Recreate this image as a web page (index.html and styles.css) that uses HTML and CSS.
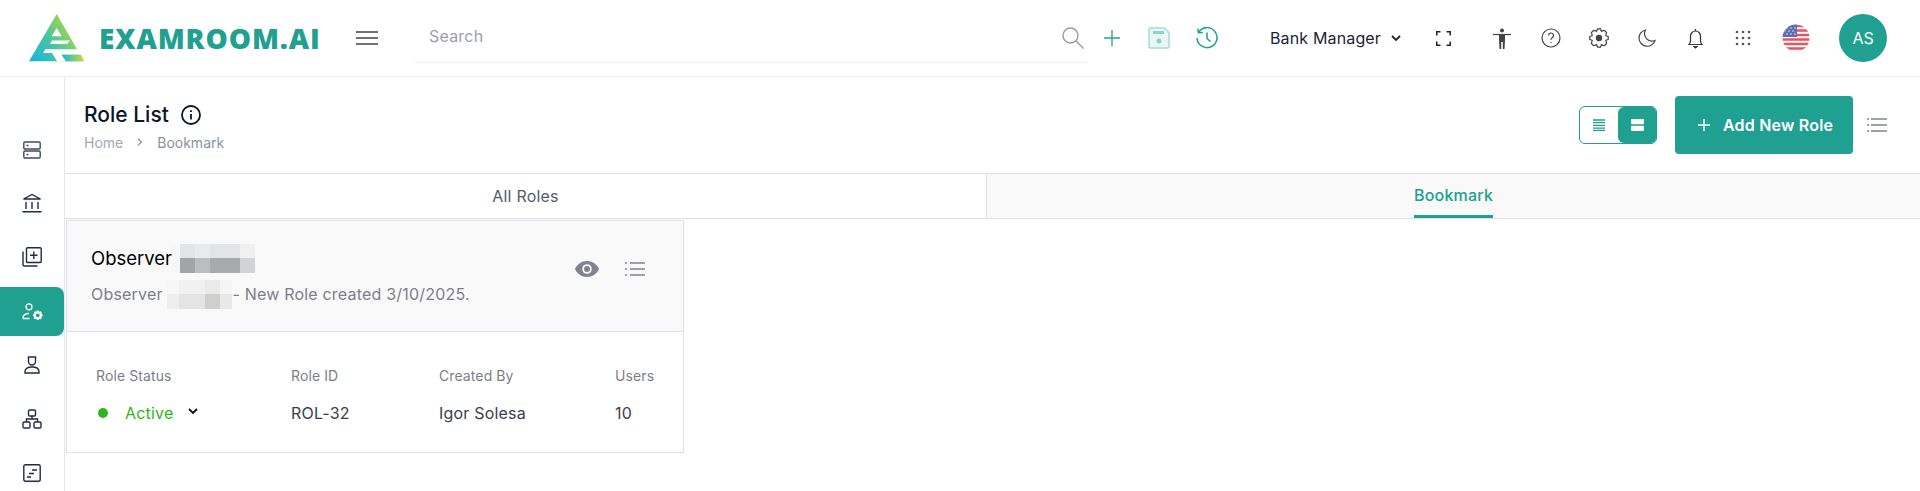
FILE: index.html
```html
<!DOCTYPE html>
<html lang="en">
<head>
    <meta charset="UTF-8">
    <meta name="viewport" content="width=device-width, initial-scale=1.0">
    <title>Role List</title>
    <link rel="stylesheet" href="styles.css">
</head>
<body>
    <header class="topbar">
        <div class="logo">
            <svg class="logo-mark" width="58" height="50" viewBox="0 0 58 50">
                <defs>
                    <linearGradient id="logo-a" x1="0" y1="1" x2="1" y2="0.4">
                        <stop offset="0" stop-color="#12b5e2"/>
                        <stop offset="0.5" stop-color="#4cc5a0"/>
                        <stop offset="1" stop-color="#c3dc2e"/>
                    </linearGradient>
                    <linearGradient id="logo-c" x1="0" y1="0" x2="1" y2="0">
                        <stop offset="0" stop-color="#14b6de"/>
                        <stop offset="1" stop-color="#c5dc35"/>
                    </linearGradient>
                </defs>
                <path d="M28.700 1L1 48.300H56z" fill="url(#logo-a)"/>
                <path d="M28.700 15L23.700 23.300H33.700zM24 27.600H42L39 31H22zM17.500 36.300H58V41.700H33.700L38 48.300H29L24 40H15z" fill="#fff"/>
                <path d="M33.700 41.700H53L56 48.300H38z" fill="url(#logo-c)"/>
            </svg>
            <span class="logo-text">EXAMROOM.AI</span>
        </div>
        <svg class="menu-icon" width="22" height="14" viewBox="0 0 22 14"><path d="M0 1h22M0 7h22M0 13h22" stroke="#444" stroke-width="1.5"/></svg>
        <div class="search">
            <span class="search-text">Search</span>
        </div>
        <svg class="search-icon" width="22" height="22" viewBox="0 0 22 22" fill="none" stroke="#9a9a9a" stroke-width="1.4"><circle cx="8.500" cy="8.500" r="7.500"/><path d="M14 14l7.500 7.500"/></svg>
        <svg class="plus-icon" width="16" height="16" viewBox="0 0 16 16"><path d="M8 0v16M0 8h16" stroke="#2aa596" stroke-width="1.4"/></svg>
        <svg class="save-icon" width="22" height="22" viewBox="0 0 22 22"><path d="M2.500 1h14L21 5.500V19.500a1.500 1.500 0 0 1-1.500 1.500h-17A1.500 1.500 0 0 1 1 19.500V2.500A1.500 1.500 0 0 1 2.500 1z" fill="#e9f6f4" stroke="#a5dcd4" stroke-width="1.500"/><path d="M5 4h11v3H5z" fill="#8fd2c9"/><circle cx="11" cy="14" r="2.500" fill="#8fd2c9"/></svg>
        <svg class="history-icon" width="22" height="22" viewBox="0 0 22 22" fill="none" stroke="#1f9f91" stroke-width="1.500"><path d="M2.400 5.500A10 10 0 1 1 1 11"/><path d="M1.800 1.500l.6 4.300 4.300-.3M11 5.500v6l3.500 3"/></svg>
        <div class="role-select">
            <span>Bank Manager</span>
            <svg width="10" height="7" viewBox="0 0 10 7" fill="none" stroke="#1c2433" stroke-width="1.800"><path d="M1 1l4 4 4-4"/></svg>
        </div>
        <svg class="full-icon" width="15" height="15" viewBox="0 0 15 15" fill="none" stroke="#222" stroke-width="1.500"><path d="M.8 4.500V.8h3.700M10.500.8h3.700v3.700M14.200 10.500v3.700h-3.700M4.500 14.200H.8v-3.700"/></svg>
        <div class="tools">
            <svg width="18" height="21" viewBox="0 0 18 21"><circle cx="9" cy="2.500" r="2" fill="#444"/><path d="M0 6.500h18" stroke="#444" stroke-width="1.200"/><path d="M6 6.500h6V12l-.5 9h-1.700V14H8.200v7H6.500L6 12z" fill="#444"/></svg>
            <svg width="20" height="20" viewBox="0 0 20 20" fill="none" stroke="#444" stroke-width="1.200"><circle cx="10" cy="10" r="9"/><path d="M7.500 7.500a2.500 2.500 0 1 1 3.700 2.200c-.8.500-1.200 1-1.200 2"/><path d="M10 14v1"/></svg>
            <svg class="gear-icon" width="20" height="20" viewBox="0 0 20 20" fill="none" stroke="#444" stroke-width="1.200"><path d="M8.500 .8h3l.8 2.400 3.140-.76 2.120 2.120-.76 3.140 2.400.8v3l-2.400.8.76 3.140-2.120 2.120-3.140-.76-.8 2.400h-3l-.8-2.400-3.140.76-2.120-2.120.76-3.140-2.400-.8v-3l2.400-.8-.76-3.140 2.120-2.120 3.140.76z"/><circle cx="10" cy="10" r="2.600" fill="#444"/></svg>
            <svg class="moon-icon" width="18" height="18" viewBox="0 0 18 18" fill="none" stroke="#444" stroke-width="1.200"><path d="M7.500 1a8.200 8.200 0 1 0 9.500 10.500A7.500 7.500 0 0 1 7.500 1z"/></svg>
            <svg width="15" height="21" viewBox="0 0 15 21" fill="none" stroke="#333" stroke-width="1.200"><path d="M1 16.500h13c-1.200-1-1.500-2-1.500-4V8a5 5 0 0 0-10 0v4.500c0 2-.3 3-1.500 4z"/><path d="M7.500 1v2"/><path d="M6 18.500h3l-1.500 1.500z" fill="#333"/></svg>
            <svg class="apps-icon" width="16" height="16" viewBox="0 0 16 16" fill="#555"><circle cx="2" cy="2" r="1.300"/><circle cx="8" cy="2" r="1.300"/><circle cx="14" cy="2" r="1.300"/><circle cx="2" cy="8" r="1.300"/><circle cx="8" cy="8" r="1.300"/><circle cx="14" cy="8" r="1.300"/><circle cx="2" cy="14" r="1.300"/><circle cx="8" cy="14" r="1.300"/><circle cx="14" cy="14" r="1.300"/></svg>
        </div>
        <svg class="flag" width="28" height="28" viewBox="0 0 28 28">
            <defs><clipPath id="flag-clip"><circle cx="14" cy="14" r="13.500"/></clipPath></defs>
            <g clip-path="url(#flag-clip)">
                <rect width="28" height="28" fill="#fff"/>
                <path d="M0 2h28M0 6.500h28M0 11h28M0 15.500h28M0 20h28M0 24.500h28" stroke="#e9525f" stroke-width="2.300"/>
                <rect width="15" height="13" fill="#5c6fb0"/>
                <g fill="#dfe4f5"><circle cx="5" cy="4" r=".8"/><circle cx="9" cy="4" r=".8"/><circle cx="13" cy="4" r=".8"/><circle cx="3" cy="7" r=".8"/><circle cx="7" cy="7" r=".8"/><circle cx="11" cy="7" r=".8"/><circle cx="5" cy="10" r=".8"/><circle cx="9" cy="10" r=".8"/><circle cx="13" cy="10" r=".8"/></g>
            </g>
        </svg>
        <div class="avatar">AS</div>
    </header>

    <div class="layout">
        <nav class="sidebar">
            <a class="side-item"><svg width="18" height="18" viewBox="0 0 18 18" fill="none" stroke="#3e4c5e" stroke-width="1.400"><rect x=".8" y="1" width="16.400" height="7" rx="1.200"/><rect x=".8" y="10" width="16.400" height="7" rx="1.200"/><path d="M3.500 4.500h2M3.500 13.500h2"/></svg></a>
            <a class="side-item"><svg width="20" height="20" viewBox="0 0 20 20" fill="none" stroke="#1f2d3f" stroke-width="1.400"><path d="M1.500 6L10 1.500 18.500 6z"/><path d="M4 9v7M10 9v7M16 9v7M.5 18.800h19"/></svg></a>
            <a class="side-item"><svg width="20" height="20" viewBox="0 0 20 20" fill="none" stroke="#1f2d3f" stroke-width="1.400"><rect x="4.500" y=".8" width="14.700" height="14.700" rx="1"/><path d="M11.800 4.500v7.400M8.100 8.200h7.400M1 4.500v13a1.500 1.500 0 0 0 1.500 1.500h13"/></svg></a>
            <a class="side-item active"><svg width="21" height="18" viewBox="0 0 21 18"><g fill="none" stroke="#fff" stroke-width="1.300"><circle cx="7" cy="3.800" r="3"/><path d="M1 15.500v-1.200c0-2 2.500-3.800 6-3.800M1 15.500h6.500"/></g><path transform="translate(11 7.500) scale(.48)" fill="#fff" fill-rule="evenodd" d="M8 0h4l.8 2.600 3.100-.9 2.400 2.400-.9 3.100L20 8v4l-2.600.8.900 3.100-2.400 2.400-3.100-.9L12 20H8l-.8-2.600-3.100.9-2.400-2.400.9-3.100L0 12V8l2.600-.8-.9-3.100 2.400-2.400 3.100.9zM10 6a4 4 0 1 0 0 8 4 4 0 0 0 0-8z"/></svg></a>
            <a class="side-item"><svg width="16" height="18" viewBox="0 0 16 18" fill="none" stroke="#1f2d3f" stroke-width="1.400"><path d="M4.500 1h7v4.500a3.500 3.500 0 0 1-7 0z"/><path d="M1 17v-1.500C1 12.500 4 11 8 11s7 1.500 7 4.500V17z"/></svg></a>
            <a class="side-item"><svg width="20" height="20" viewBox="0 0 20 20" fill="none" stroke="#1f2d3f" stroke-width="1.400"><rect x="6.500" y="1" width="7" height="6" rx="1.200"/><rect x="1" y="13" width="7" height="6" rx="1.200"/><rect x="12" y="13" width="7" height="6" rx="1.200"/><path d="M10 7v3M4.500 13v-3h11v3"/></svg></a>
            <a class="side-item"><svg width="18" height="18" viewBox="0 0 18 18" fill="none" stroke="#1f2d3f" stroke-width="1.400"><rect x=".8" y=".8" width="16.400" height="16.400" rx="1.500"/><path d="M9 6h5M6 9.500h5M4 13h4"/></svg></a>
        </nav>

        <main class="content">
            <div class="page-head">
                <div>
                    <h1 class="page-title">Role List
                        <svg width="20" height="20" viewBox="0 0 20 20" fill="none" stroke="#0c1526" stroke-width="1.800"><circle cx="10" cy="10" r="9"/><path d="M10 9v5.500M10 5.200v1.800"/></svg>
                    </h1>
                    <div class="crumbs">
                        <span>Home</span>
                        <svg width="6" height="8" viewBox="0 0 6 8" fill="none" stroke="#8b92a0" stroke-width="1.200"><path d="M1 .8L4.500 4 1 7.200"/></svg>
                        <span class="crumb-current">Bookmark</span>
                    </div>
                </div>
                <div class="page-actions">
                    <div class="view-toggle">
                        <span class="toggle-btn"><svg width="12" height="12" viewBox="0 0 12 12"><path d="M0 1h12M0 3.700h12M0 6.400h12M0 9.100h12M0 11.500h12" stroke="#1f9f91" stroke-width="1.300"/></svg></span>
                        <span class="toggle-btn on"><svg width="13" height="12" viewBox="0 0 13 12" fill="#fff"><rect width="13" height="5.300" rx="1"/><rect y="6.700" width="13" height="5.300" rx="1"/></svg></span>
                    </div>
                    <button class="add-btn">
                        <svg width="12" height="12" viewBox="0 0 12 12"><path d="M6 0v12M0 6h12" stroke="#fff" stroke-width="1.400"/></svg>
                        Add New Role
                    </button>
                    <svg width="20" height="16" viewBox="0 0 20 16"><path d="M4 2h16M4 8h16M4 14h16M0 2h2M0 8h2M0 14h2" stroke="#80848f" stroke-width="1.500"/></svg>
                </div>
            </div>

            <div class="tabs">
                <div class="tab current">All Roles</div>
                <div class="tab selected"><span class="tab-label">Bookmark</span></div>
            </div>

            <section class="card">
                <div class="card-head">
                    <div>
                        <div class="card-title">Observer<span class="mosaic mosaic-title"></span></div>
                        <div class="card-desc">Observer <span class="mosaic mosaic-desc"></span>- New Role created 3/10/2025.</div>
                    </div>
                    <div class="card-icons">
                        <svg width="24" height="16" viewBox="0 0 24 16"><path d="M12 0C6.500 0 2 3.300 0 8c2 4.700 6.500 8 12 8s10-3.300 12-8c-2-4.700-6.500-8-12-8z" fill="#80848f"/><circle cx="12" cy="8" r="4.800" fill="#f9f9fa"/><circle cx="12" cy="8" r="3" fill="#80848f"/></svg>
                        <svg width="20" height="16" viewBox="0 0 20 16"><path d="M5 2h15M5 8h15M5 14h15M0 2h2M0 8h2M0 14h2" stroke="#80848f" stroke-width="1.500"/></svg>
                    </div>
                </div>
                <div class="card-body">
                    <div class="field">
                        <span class="field-label">Role Status</span>
                        <span class="status"><i class="status-dot"></i>Active
                            <svg width="10" height="7" viewBox="0 0 10 7" fill="none" stroke="#111" stroke-width="1.800"><path d="M1 1l4 4 4-4"/></svg>
                        </span>
                    </div>
                    <div class="field">
                        <span class="field-label">Role ID</span>
                        <span class="field-value">ROL-32</span>
                    </div>
                    <div class="field">
                        <span class="field-label">Created By</span>
                        <span class="field-value">Igor Solesa</span>
                    </div>
                    <div class="field">
                        <span class="field-label">Users</span>
                        <span class="field-value">10</span>
                    </div>
                </div>
            </section>
        </main>
    </div>
</body>
</html>
```
FILE: styles.css
```css
* {
    box-sizing: border-box;
}
body {
    margin: 0;
    height: 491px;
    overflow: hidden;
    font-family: Inter, "Liberation Sans", sans-serif;
    background-color: #fff;
    color: #1c2433;
}
svg {
    display: block;
    flex: none;
}

/* top bar */
.topbar {
    display: flex;
    align-items: center;
    height: 77px;
    padding-left: 28px;
    border-bottom: 1px solid #eceef2;
}
.logo {
    display: flex;
    align-items: center;
    gap: 13px;
    width: 328px;
}
.logo-text {
    font-family: "Open Sans", sans-serif;
    font-size: 28px;
    font-weight: 800;
    letter-spacing: 0.9px;
    color: #20a090;
}
.menu-icon {
    margin-right: 37px;
}
.search {
    width: 672px;
    height: 48px;
    margin-top: 2px;
    padding: 11px 14px;
    border-bottom: 1px solid #eceef2;
}
.search-text {
    font-size: 16px;
    letter-spacing: 0.2px;
    color: #9aa1ad;
}
.search-icon {
    margin-left: -25px;
    margin-right: 20px;
}
.plus-icon {
    margin-right: 28px;
}
.save-icon {
    margin-right: 26px;
}
.role-select {
    display: flex;
    align-items: center;
    gap: 10px;
    margin-left: 52px;
    font-size: 16px;
    letter-spacing: 0.15px;
}
.full-icon {
    margin-left: 35px;
}
.tools {
    display: flex;
    align-items: center;
    gap: 30px;
    margin-left: 42px;
}
.gear-icon {
    margin-left: -2px;
}
.moon-icon {
    margin: 0 2px 0 -1px;
}
.apps-icon {
    margin-left: 2px;
}
.flag {
    margin-left: 31px;
}
.avatar {
    display: flex;
    align-items: center;
    justify-content: center;
    width: 48px;
    height: 48px;
    margin-left: 29px;
    border-radius: 50%;
    font-size: 16px;
    color: #fff;
    background-color: #20a090;
}

/* sidebar */
.layout {
    display: flex;
}
.sidebar {
    display: flex;
    flex-direction: column;
    flex: none;
    align-items: stretch;
    width: 65px;
    height: 414px;
    padding-top: 46px;
    border-right: 1px solid #e6e8ee;
}
.side-item {
    display: flex;
    flex: none;
    align-items: center;
    justify-content: center;
    height: 54px;
}
.side-item:first-child {
    height: 53px;
}
.side-item.active {
    height: 49px;
    margin: 3px 0 2px;
    border-radius: 0 8px 8px 0;
    background-color: #20a090;
}

/* page head */
.content {
    flex: 1;
}
.page-head {
    display: flex;
    align-items: center;
    justify-content: space-between;
    height: 97px;
    padding: 0 33px 0 19px;
    border-bottom: 1px solid #dddfe6;
}
.page-title {
    display: flex;
    align-items: center;
    gap: 12px;
    margin: 3px 0 7px;
    font-size: 21px;
    font-weight: 500;
    line-height: 24px;
    color: #0c1526;
}
.crumbs {
    display: flex;
    align-items: center;
    gap: 14px;
    font-size: 14px;
    color: #a3a8b3;
}
.crumb-current {
    color: #8b92a0;
}
.page-actions {
    display: flex;
    align-items: center;
}
.view-toggle {
    display: flex;
    width: 78px;
    height: 38px;
    margin-right: 18px;
    border: 1px solid #20a090;
    border-radius: 6px;
    overflow: hidden;
}
.toggle-btn {
    display: flex;
    flex: 1;
    align-items: center;
    justify-content: center;
}
.toggle-btn.on {
    border-radius: 6px 0 0 6px;
    background-color: #20a090;
}
.add-btn {
    display: flex;
    align-items: center;
    gap: 13px;
    width: 178px;
    height: 58px;
    margin-right: 14px;
    padding: 0 0 0 23px;
    border: none;
    border-radius: 4px;
    font-family: inherit;
    font-size: 16px;
    font-weight: 600;
    letter-spacing: 0.2px;
    color: #fff;
    background-color: #20a090;
}

/* tabs */
.tabs {
    display: flex;
    height: 45px;
    border-bottom: 1px solid #dde0ec;
}
.tab {
    display: flex;
    align-items: center;
    justify-content: center;
    font-size: 16px;
    letter-spacing: 0.2px;
    color: #555b66;
}
.tab.current {
    width: 921px;
    background-color: #fff;
}
.tab.selected {
    flex: 1;
    align-items: stretch;
    border-left: 1px solid #dde0ec;
    background-color: #f9f9fa;
}
.tab-label {
    display: flex;
    align-items: center;
    padding-top: 1px;
    border-bottom: 3px solid #20a090;
    font-weight: 500;
    color: #20a090;
}

/* card */
.card {
    width: 618px;
    height: 233px;
    margin: 1px 0 0 1px;
    border: 1px solid #dde0ec;
}
.card-head {
    display: flex;
    align-items: center;
    justify-content: space-between;
    height: 111px;
    padding: 0 38px 0 24px;
    border-bottom: 1px solid #dde0ec;
    background-color: #f9f9fa;
}
.card-title {
    display: flex;
    align-items: center;
    height: 29px;
    font-size: 18.5px;
    font-weight: 400;
    color: #000;
}
.card-desc {
    display: flex;
    align-items: center;
    height: 29px;
    margin-top: 7px;
    font-size: 16px;
    letter-spacing: 0.2px;
    white-space: pre;
    color: #7b7f87;
}
.card-icons {
    display: flex;
    align-items: center;
    gap: 26px;
    margin-bottom: 14px;
}

/* pixelated bits */
.mosaic {
    display: inline-block;
    height: 29px;
}
.mosaic-title {
    width: 83px;
    background:
        linear-gradient(90deg, #f6f6f7 0 8px, #a3a4a8 8px 23px, #bcbdc1 23px 38px, #a9aaae 38px 68px, #d2d3d6 68px 83px) 0 100% / 100% 15px no-repeat,
        linear-gradient(90deg, #f7f7f8 0 8px, #e3e4e6 8px 23px, #e9eaeb 23px 38px, #e3e4e6 38px 68px, #f0f0f1 68px 83px) 0 0 / 100% 14px no-repeat;
}
.mosaic-desc {
    width: 65px;
    background:
        linear-gradient(90deg, #eeeeee 0 12px, #e4e4e4 12px 38px, #cfcfcd 38px 53px, #e8e8e8 53px 65px) 0 100% / 100% 15px no-repeat,
        linear-gradient(90deg, #f7f7f7 0 12px, #f1f1f1 12px 38px, #eaeaea 38px 53px, #f5f5f5 53px 65px) 0 0 / 100% 14px no-repeat;
}

.card-body {
    display: grid;
    grid-template-columns: 195px 148px 176px 1fr;
    padding: 35px 0 0 29px;
}
.field {
    display: flex;
    flex-direction: column;
    gap: 17px;
}
.field-label {
    font-size: 14px;
    line-height: 18px;
    letter-spacing: 0.1px;
    color: #7b7f87;
}
.field-value {
    font-size: 16px;
    line-height: 22px;
    letter-spacing: 0.2px;
    color: #3c4049;
}
.status {
    display: flex;
    align-items: center;
    font-size: 16px;
    line-height: 22px;
    letter-spacing: 0.2px;
    color: #2fb61c;
}
.status-dot {
    width: 10px;
    height: 10px;
    margin: 0 17px 0 2px;
    border-radius: 50%;
    background-color: #2fb61c;
}
.status svg {
    margin-left: 14px;
    margin-top: -3px;
}
```
